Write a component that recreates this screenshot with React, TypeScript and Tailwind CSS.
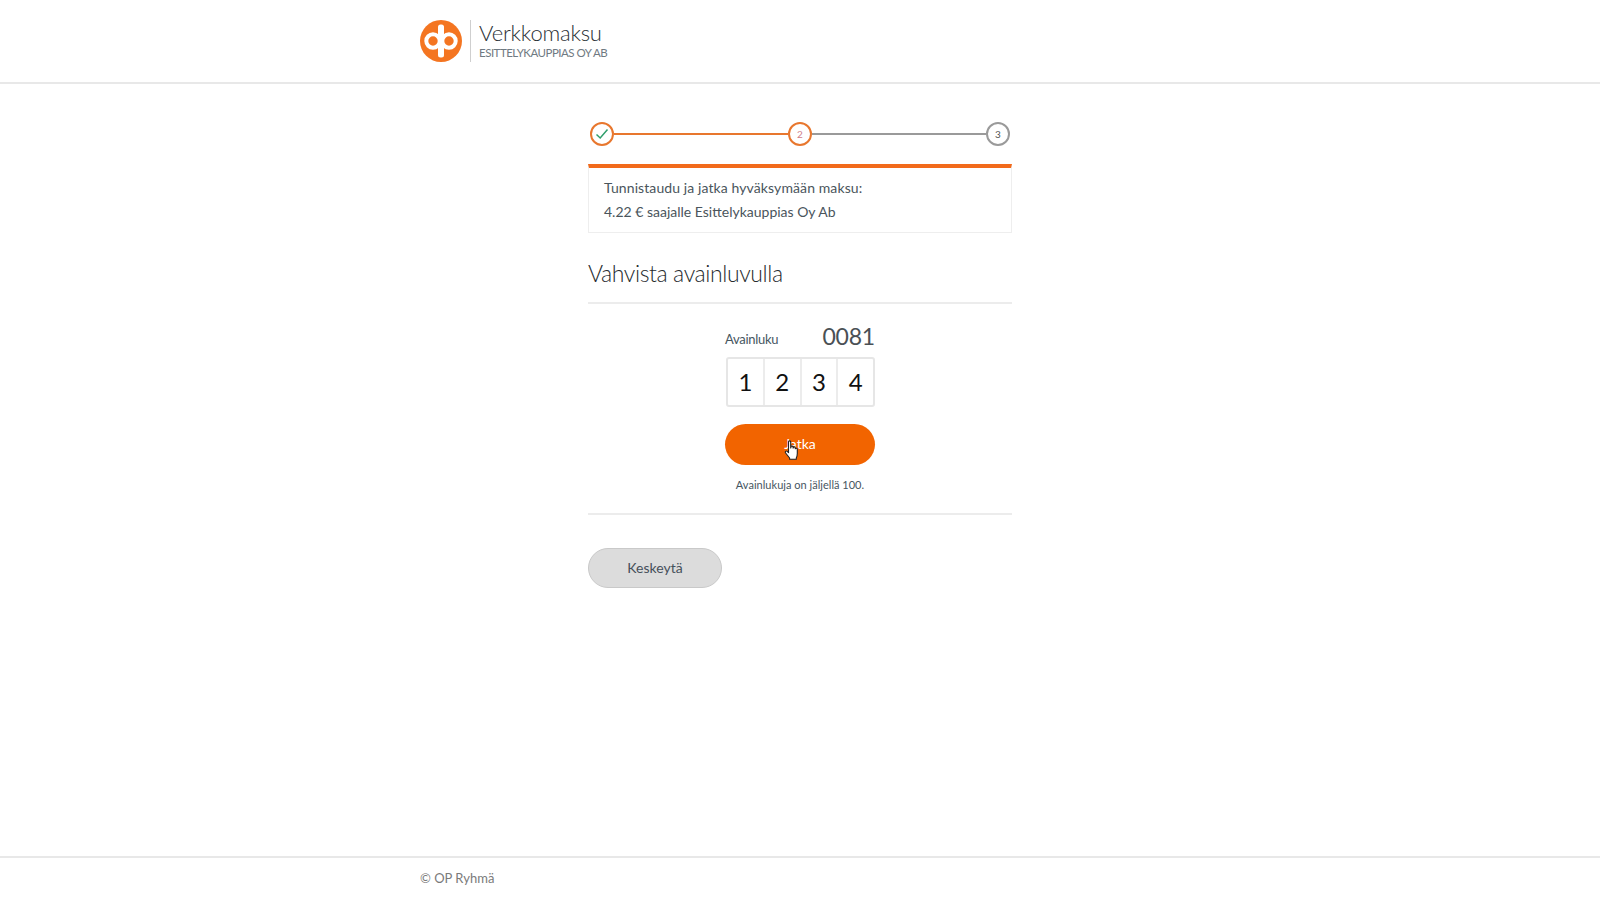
import React from "react";

const F = { fontFamily: '"Lato", "Noto Sans", sans-serif' };

function Logo() {
  return (
    <svg width="42" height="42" viewBox="0 0 42 42" className="shrink-0">
      <circle cx="21" cy="21" r="21" fill="#f47521" />
      <circle cx="13" cy="21" r="6.7" fill="none" stroke="#fff" strokeWidth="4" />
      <circle cx="29" cy="21" r="6.7" fill="none" stroke="#fff" strokeWidth="4" />
      <rect x="18" y="4.5" width="6" height="33" rx="2.5" fill="#fff" />
    </svg>
  );
}

function Hand() {
  return (
    <svg width="16" height="21" viewBox="0 0 16 21" className="absolute left-[59px] top-[16px]">
      <path
        d="M4.5 1.8c0-1.3 2.2-1.3 2.2 0V8l.3-1.2c.3-1.1 2.1-.9 2.1.3v1l.2-.6c.4-1 2-.7 2 .4v.9c.4-.9 2-.7 2 .5v4.2c0 2-.3 3-1 4.4v1.3H5.6v-1.2L1.6 13c-1-1.3.5-2.6 1.6-1.6l1.3 1.3z"
        fill="#fff"
        stroke="#222"
        strokeWidth="1.1"
        strokeLinejoin="round"
      />
    </svg>
  );
}

function Step({ color, children }: { color: string; children: React.ReactNode }) {
  return (
    <div
      className={`w-[24px] h-[24px] rounded-full border-2 bg-white flex items-center justify-center text-[10px] shrink-0 ${color}`}
    >
      {children}
    </div>
  );
}

export default function App() {
  return (
    <div className="min-h-[900px] h-[900px] flex flex-col bg-white text-[#3c4448]" style={F}>
      <header className="h-[84px] border-b-2 border-[#e8e8e8] shrink-0">
        <div className="w-[760px] mx-auto pt-[20px] flex">
          <Logo />
          <div className="w-px h-[42px] bg-[#cfcfcf] ml-[8px] mr-[8px]" />
          <div className="flex flex-col">
            <span className="text-[22px] leading-[26px] font-light text-[#2a3035] tracking-[-0.2px] mt-[-0.5px]">Verkkomaksu</span>
            <span className="text-[11.5px] leading-[14px] text-[#6f7a82] tracking-[-0.5px]">ESITTELYKAUPPIAS OY AB</span>
          </div>
        </div>
      </header>

      <main className="flex-1 w-[424px] mx-auto">
        <div className="relative mt-[38px] px-[2px] flex items-center">
          <Step color="border-[#e8772e]">
            <svg width="14" height="12" viewBox="0 0 14 12">
              <path d="M1.5 6.5 5.2 10 12.5 1.5" fill="none" stroke="#2f9e6b" strokeWidth="1.5" />
            </svg>
          </Step>
          <div className="flex-1 h-[2px] bg-[#e8772e]" />
          <Step color="border-[#e8772e] text-[#d0808a]">2</Step>
          <div className="flex-1 h-[2px] bg-[#9a9a9a]" />
          <Step color="border-[#9a9a9a] text-[#555]">3</Step>
        </div>

        <div className="mt-[18px] h-[69px] border-t-[4px] border-t-[#f26a1b] border-x border-b border-x-[#eeeeee] border-b-[#eeeeee] px-[15px] pt-[8px] text-[14px] leading-[23.5px] text-[#4a555c]">
          <div className="tracking-[0.1px]">Tunnistaudu ja jatka hyväksymään maksu:</div>
          <div>4.22 € saajalle Esittelykauppias Oy Ab</div>
        </div>

        <h1 className="mt-[25px] text-[23px] leading-[30px] font-light tracking-[-0.4px] text-[#262b2e] pb-[14px] border-b-2 border-[#ececec]">
          Vahvista avainluvulla
        </h1>

        <div className="w-[150px] mx-auto mt-[12px]">
          <div className="flex items-end justify-between h-[38px]">
            <span className="text-[13px] leading-[18px] tracking-[-0.3px] text-[#46565f] mb-[6px]">Avainluku</span>
            <span className="text-[23px] leading-[32px] tracking-[-0.2px] text-[#4a5055] mb-[2px]">0081</span>
          </div>
          <div className="ml-[1px] mt-[3px] h-[50px] w-[149px] border-2 border-[#e6e6e6] rounded-[3px] flex text-[24px] text-[#111] font-normal">
            <div className="flex-1 flex items-center justify-center border-r-2 border-[#ececec]">1</div>
            <div className="flex-1 flex items-center justify-center border-r-2 border-[#ececec]">2</div>
            <div className="flex-1 flex items-center justify-center border-r-2 border-[#ececec]">3</div>
            <div className="flex-1 flex items-center justify-center">4</div>
          </div>
          <button className="relative mt-[17px] w-full h-[41px] rounded-full bg-[#f26400] text-white text-[14px] flex items-center justify-center pb-[3px]">
            Jatka
            <Hand />
          </button>
        </div>

        <p className="mt-[11px] text-center text-[11px] leading-[18px] text-[#46565f] tracking-[0.02px]">Avainlukuja on jäljellä 100.</p>
        <div className="mt-[19px] h-[2px] bg-[#ececec]" />

        <button className="mt-[33px] w-[134px] h-[40px] rounded-full bg-[#dcdcdc] border border-[#c9c9c9] text-[14px] text-[#46505a] pb-[1px]">
          Keskeytä
        </button>
      </main>

      <footer className="h-[44px] border-t-2 border-[#e8e8e8] shrink-0">
        <div className="w-[760px] mx-auto pt-[10px] text-[13px] leading-[20px] text-[#7a7a7a]">© OP Ryhmä</div>
      </footer>
    </div>
  );
}
